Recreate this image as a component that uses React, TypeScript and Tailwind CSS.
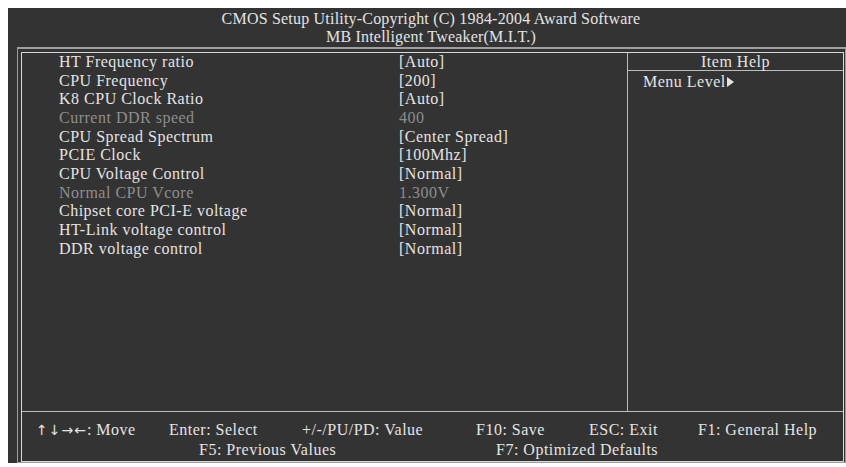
import React from "react";

type Row = { label: string; value: string; dim?: boolean };

const rows: Row[] = [
    { label: "HT Frequency ratio", value: "[Auto]" },
    { label: "CPU Frequency", value: "[200]" },
    { label: "K8 CPU Clock Ratio", value: "[Auto]" },
    { label: "Current DDR speed", value: "400", dim: true },
    { label: "CPU Spread Spectrum", value: "[Center Spread]" },
    { label: "PCIE Clock", value: "[100Mhz]" },
    { label: "CPU Voltage Control", value: "[Normal]" },
    { label: "Normal CPU Vcore", value: "1.300V", dim: true },
    { label: "Chipset core PCI-E voltage", value: "[Normal]" },
    { label: "HT-Link voltage control", value: "[Normal]" },
    { label: "DDR voltage control", value: "[Normal]" },
];

const App = () => {
    return (
        <div
            className="w-[846px] h-[467px] bg-white pt-[8px] pl-[8px] overflow-hidden text-[16px] tracking-[0.5px] text-[#e4e4e4]"
            style={{ fontFamily: '"Liberation Serif", "Times New Roman", serif' }}
        >
            <div className="w-[838px] h-[455px] bg-[#333333] flex flex-col">
                {/* title */}
                <div className="h-[39px] pl-[8px] flex flex-col items-center leading-[18px] pt-[2px] tracking-[0.2px]">
                    <div>CMOS Setup Utility-Copyright (C) 1984-2004 Award Software</div>
                    <div>MB Intelligent Tweaker(M.I.T.)</div>
                </div>

                {/* double frame */}
                <div className="ml-[9px] flex-1 border-t-2 border-l border-r border-b border-[#9e9e9e] pt-[3px] pl-[3px] pr-[1px]">
                    <div className="h-[410px] border border-[#d8d8d8] flex flex-col">
                        <div className="flex h-[359px] border-b border-[#bdbdbd]">
                            {/* settings list */}
                            <div className="w-[606px] border-r border-[#bdbdbd] leading-[18.67px]">
                                {rows.map((r) => (
                                    <div
                                        key={r.label}
                                        className={`flex ${r.dim ? "text-[#8e8e8e]" : ""}`}
                                    >
                                        <div className="w-[377px] pl-[37px]">{r.label}</div>
                                        <div>{r.value}</div>
                                    </div>
                                ))}
                            </div>

                            {/* item help */}
                            <div className="flex-1 flex flex-col">
                                <div className="h-[18px] border-b border-[#bdbdbd] text-center leading-[18px]">
                                    Item Help
                                </div>
                                <div className="pl-[15px] pt-[1px] leading-[19px] flex items-center">
                                    Menu Level
                                    <svg width="7" height="10" viewBox="0 0 7 10" className="ml-[1px]">
                                        <path d="M0 0 L7 5 L0 10 Z" fill="#e4e4e4" />
                                    </svg>
                                </div>
                            </div>
                        </div>

                        {/* key legend */}
                        <div className="flex-1 flex flex-col pt-[8px] leading-[19px]">
                            <div className="flex">
                                <span className="w-[147px] pl-[14px]">
                                    <span
                                        className="text-[14px] tracking-[1px]"
                                        style={{ fontFamily: '"DejaVu Sans", sans-serif' }}
                                    >
                                        ↑↓→←
                                    </span>
                                    : Move
                                </span>
                                <span className="w-[133px]">Enter: Select</span>
                                <span className="w-[174px]">+/-/PU/PD: Value</span>
                                <span className="w-[113px]">F10: Save</span>
                                <span className="w-[109px]">ESC: Exit</span>
                                <span>F1: General Help</span>
                            </div>
                            <div className="flex">
                                <span className="w-[474px] pl-[177px]">F5: Previous Values</span>
                                <span>F7: Optimized Defaults</span>
                            </div>
                        </div>
                    </div>
                </div>
            </div>
        </div>
    );
};

export default App;
